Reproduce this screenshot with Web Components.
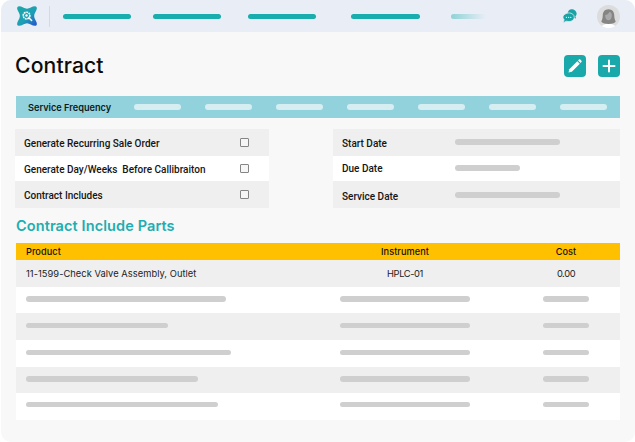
<!DOCTYPE html>
<html><head><meta charset="utf-8">
<style>
html,body{margin:0;padding:0;background:#fff;width:635px;height:442px;overflow:hidden}
body{font-family:"Inter","Liberation Sans",sans-serif}
</style></head><body>
<contract-app></contract-app>
<template id="t-app">
<style>
:host{display:block;width:634px;height:442px;margin-left:1px;background:#f8f8f8;border-radius:10px;overflow:hidden;color:#111}
main{display:flex;flex-direction:column;padding:0 15px}
.title{display:flex;justify-content:space-between;align-items:center;height:64px;padding-top:4px;box-sizing:border-box}
h1{margin:0 0 1px -1px;font:500 21.2px/1 "Inter",sans-serif;letter-spacing:.1px;color:#0c0c0c}
.acts{display:flex;gap:12px}
.forms{display:flex;justify-content:space-between;margin-top:11px;margin-left:-1px}
h2{margin:7px 0 0 0;height:28px;font:600 14.500px/22px "Inter",sans-serif;color:#1eadb0;letter-spacing:.1px}
</style>
<top-nav></top-nav>
<main>
<div class="title"><h1>Contract</h1><div class="acts"><icon-btn kind="edit"></icon-btn><icon-btn kind="plus"></icon-btn></div></div>
<freq-bar></freq-bar>
<div class="forms">
<form-table style="width:254px">
<form-row><span>Generate Recurring Sale Order</span><check-box></check-box></form-row>
<form-row short white><span>Generate Day/Weeks&nbsp; Before Callibraiton</span><check-box></check-box></form-row>
<form-row><span>Contract Includes</span><check-box></check-box></form-row>
</form-table>
<form-table style="width:287px">
<form-row date><span>Start Date</span><ph-bar w="105"></ph-bar></form-row>
<form-row date short white style="--n:0px"><span>Due Date</span><ph-bar w="65"></ph-bar></form-row>
<form-row date style="--n:3px"><span>Service Date</span><ph-bar w="105" style="margin-bottom:0"></ph-bar></form-row>
</form-table>
</div>
<h2>Contract Include Parts</h2>
<parts-table>
<parts-head></parts-head>
<parts-row grey h="27"><b class="t">11-1599-Check Valve Assembly, Outlet</b></parts-row>
<parts-row h="26" w="200"></parts-row>
<parts-row grey h="27" w="142"></parts-row>
<parts-row h="27" w="205"></parts-row>
<parts-row grey h="26" w="172"></parts-row>
<parts-row h="27" w="192" style="--p:4px"></parts-row>
</parts-table>
</main>
</template>
<script>
const def=(n,html,extra)=>{customElements.define(n,class extends HTMLElement{
 constructor(){super();this.attachShadow({mode:'open'}).innerHTML=typeof html==='function'?html(this):html;}
 connectedCallback(){if(extra)extra(this)}
})};
customElements.define('contract-app',class extends HTMLElement{constructor(){super();this.attachShadow({mode:'open'}).appendChild(document.getElementById('t-app').content.cloneNode(true));}});
def('top-nav',`<style>
:host{display:flex;align-items:center;height:32px;background:#e9edf6}
.logo{width:22px;height:22px;margin-left:15px;flex:none}
.sep{width:1px;height:21px;background:#d5d9e2;margin-left:11px;flex:none}
.b{height:5px;border-radius:3px;background:#1aadad;flex:none}
.chat{width:17px;height:17px;margin-left:auto;flex:none}
.av{width:23px;height:23px;border-radius:50%;background:#dcdcdc;margin:0 15px 0 18px;flex:none;overflow:hidden}
svg{display:block}
</style>
<svg class="logo" viewBox="0 0 24 24"><defs><linearGradient id="g" x1="0" y1="0" x2="1" y2="1"><stop offset="0" stop-color="#1aa9a6"/><stop offset=".55" stop-color="#1e9fb5"/><stop offset="1" stop-color="#2a4fd0"/></linearGradient></defs>
<path fill="url(#g)" d="M2.500 1.500C6 1 9 4 12 4.200 15 4 18 1 21.500 1.500 23 2 22.900 3.500 22.500 5 21.500 7.500 19.800 9.500 19.800 12c0 2.500 1.700 4.500 2.700 7 .4 1.600.5 3-1 3.500-3.500.5-6.500-2.500-9.500-2.700-3 .2-6 3.200-9.500 2.700C1 22 1.100 20.600 1.500 19 2.500 16.500 4.200 14.500 4.200 12 4.200 9.500 2.500 7.500 1.500 5 1.100 3.500 1 2 2.500 1.500Z"/>
<circle cx="11.500" cy="11.500" r="3.600" fill="none" stroke="#fff" stroke-width="1.800" stroke-dasharray="2 .7"/><circle cx="11.500" cy="11.500" r="1.300" fill="#fff"/><path d="M14 14l3 3" stroke="#fff" stroke-width="1.600" stroke-linecap="round"/></svg>
<i class="sep"></i>
<i class="b" style="width:68px;margin-left:13px"></i><i class="b" style="width:68px;margin-left:22px"></i><i class="b" style="width:68px;margin-left:27px"></i><i class="b" style="width:69px;margin-left:35px"></i>
<i class="b" style="width:35px;margin-left:31px;background:linear-gradient(90deg,#8fd3d6,#e9edf6)"></i>
<svg class="chat" viewBox="0 0 18 18"><path fill="#1aa3a5" d="M10 1.200c3 0 5.500 2 5.500 4.700 0 1.300-.5 2.300-1.300 3.200l.7 2-2.600-.8C12 7.500 10 5.500 6 5.300 6.500 3 8 1.200 10 1.200Z"/><path fill="#1aa3a5" stroke="#e9edf6" stroke-width=".8" d="M7.500 5.200c3 0 5.500 2 5.500 4.600S10.500 14.400 7.500 14.400c-.9 0-1.700-.2-2.500-.5L1 15.500l1.300-3C1.500 11.700 1 10.800 1 9.800 1 7.200 4.500 5.200 7.500 5.200Z"/><g fill="#fff"><circle cx="4.700" cy="9.900" r=".7"/><circle cx="7" cy="9.900" r=".7"/><circle cx="9.300" cy="9.900" r=".7"/></g></svg>
<div class="av"><svg width="23" height="23" viewBox="0 0 24 24"><path fill="#fff" d="M4 24c1-3.500 4.500-4.500 8-4.500s7 1 8 4.500Z"/><path fill="#858585" d="M12 4.500c-4 0-6 3-6 6.500 0 3-1 5-1.500 6.500 1.500 1.500 4 2.300 7.500 2.300s6-.8 7.500-2.300C19 16 18 14 18 11c0-3.500-2-6.500-6-6.500Z"/><path fill="#a9a9a9" d="M13 7c-.5 2-2.500 3-4.500 3.500C8.500 14 10 16 12 16s3.500-2 3.500-5.500c0-1.500-1-3-2.500-3.500Z"/></svg></div>`);
def('icon-btn',h=>{const k=h.getAttribute('kind');return `<style>:host{display:block;width:22px;height:22px;border-radius:4px;background:#1aa9aa}svg{display:block}</style>`+(k==='edit'
?`<svg width="22" height="22" viewBox="0 0 22 22"><path fill="#fff" d="M5.300 14.200l8-8 2.500 2.500-8 8-3.300.8Z"/><path fill="#fff" d="M14.100 5.400l.8-.8a1 1 0 0 1 1.400 0l1.100 1.100a1 1 0 0 1 0 1.400l-.8.800Z"/></svg>`
:`<svg width="22" height="22" viewBox="0 0 22 22"><path stroke="#fff" stroke-width="2" stroke-linecap="round" d="M11 5.500v11M5.500 11h11"/></svg>`)});
def('freq-bar',`<style>
:host{display:flex;align-items:center;height:22px;background:#92d2dc;padding-left:12px;font:600 9.200px "Inter",sans-serif;color:#0e1a1c}
span{width:105.500px;flex:none;white-space:nowrap}
i{width:47px;height:5.500px;border-radius:3px;background:#d6eef2;margin-right:24px;flex:none}
</style><span>Service Frequency</span><i></i><i></i><i></i><i></i><i></i><i></i><i></i>`);
def('form-table',`<style>:host{display:flex;flex-direction:column}</style><slot></slot>`);
def('form-row',h=>`<style>
:host{display:flex;align-items:center;height:27px;background:#efefef;padding-left:9px;font:500 10px "Roboto",sans-serif;color:#151515;white-space:nowrap}
:host([white]){background:#fff}
:host([short]){height:25px}
.s{width:216px;flex:none;padding-top:var(--n,1px)}
:host([date]) .s{width:113px}
</style><div class="s"><slot name="x"></slot></div><slot></slot>`,h=>{const s=h.querySelector('span');s.slot='x';});
def('check-box',`<style>:host{display:block;width:7px;height:7px;border:1px solid #858585;border-radius:1px;background:#f6f6f6}</style>`);
def('ph-bar',h=>`<style>:host{display:block;height:6px;width:${h.getAttribute('w')}px;border-radius:3px;background:#cfcfcf;margin-bottom:1px}</style>`);
def('parts-table',`<style>:host{display:flex;flex-direction:column;width:604px}</style><slot></slot>`);
const cols='grid-template-columns:314px 130px 73px 46px;padding-left:10px;';
def('parts-head',`<style>
:host{display:grid;${cols}align-items:center;height:17px;background:#ffc000;font:500 9.200px "Inter",sans-serif;color:#15120a;letter-spacing:.05px}
.c{text-align:center}
</style><span>Product</span><span class="c">Instrument</span><span></span><span class="c">Cost</span>`);
def('parts-row',h=>{const w=h.getAttribute('w');const H=h.getAttribute('h');return `<style>
:host{display:grid;${cols}align-items:center;height:${H}px;box-sizing:border-box;background:#fff;font:400 9.300px "Inter",sans-serif;color:#222}
:host([grey]){background:#efefef}
.c{text-align:center}
.k{letter-spacing:-.4px}
i{display:block;height:5.500px;border-radius:3px;background:#cfcfcf;margin-bottom:var(--p,2px)}
::slotted(b){font-weight:400;white-space:nowrap;letter-spacing:.05px}
</style>`+(w?`<i style="width:${w}px"></i><i></i><span></span><i></i>`:`<slot></slot><span class="c k">HPLC-01</span><span></span><span class="c k">0.00</span>`)});
</script>
</body></html>
